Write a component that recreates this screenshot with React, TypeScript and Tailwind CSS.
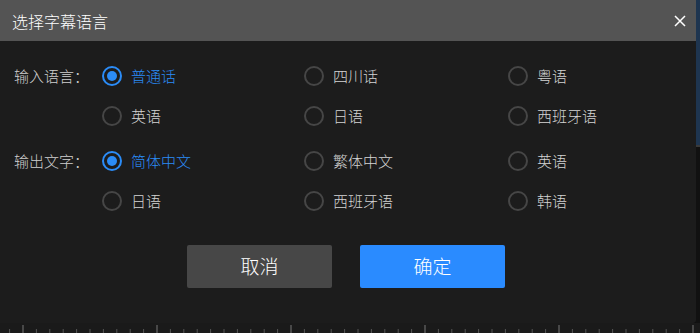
import React, { useState } from 'react';

const font = { fontFamily: '"Noto Sans CJK SC", "Noto Sans", sans-serif' };

const inputLangs = ['普通话', '四川话', '粤语', '英语', '日语', '西班牙语'];
const outputLangs = ['简体中文', '繁体中文', '英语', '日语', '西班牙语', '韩语'];

type RadioGroupProps = {
  label: string;
  options: string[];
  value: string;
  onChange: (v: string) => void;
};

const Radio = ({ checked, text, onClick }: { checked: boolean; text: string; onClick: () => void }) => (
  <button onClick={onClick} className="flex items-center h-[40px] gap-[9px] text-left">
    {checked ? (
      <span className="w-[20px] h-[20px] rounded-full border-2 border-[#2b8cf7] flex items-center justify-center">
        <span className="w-[10px] h-[10px] rounded-full bg-[#2b8cf7]" />
      </span>
    ) : (
      <span className="w-[20px] h-[20px] rounded-full border-2 border-[#464646]" />
    )}
    <span className={checked ? 'text-[#2b8cf7]' : 'text-[#d4d4d4]'}>{text}</span>
  </button>
);

const RadioGroup = ({ label, options, value, onChange }: RadioGroupProps) => (
  <div className="flex">
    <div className="w-[102px] pl-[14px] h-[40px] flex items-center text-[#cfcfcf]">{label}</div>
    <div className="grid grid-cols-[202px_204px_150px]">
      {options.map((o) => (
        <Radio key={o} text={o} checked={o === value} onClick={() => onChange(o)} />
      ))}
    </div>
  </div>
);

const Ruler = () => {
  const ticks = Array.from({ length: 53 }, (_, i) => i);
  return (
    <svg width="700" height="10" className="block">
      {ticks.map((i) => {
        const x = 23 + (i - 1) * 13.4;
        const major = (i - 1) % 10 === 0;
        return (
          <line
            key={i}
            x1={x}
            x2={x}
            y1={major ? 2 : 6}
            y2={10}
            stroke={major ? '#777' : '#555'}
            strokeWidth="1"
          />
        );
      })}
    </svg>
  );
};

export default function App() {
  const [input, setInput] = useState('普通话');
  const [output, setOutput] = useState('简体中文');

  return (
    <div className="w-[700px] h-[333px] bg-[#141414] flex flex-col overflow-hidden font-light" style={font}>
      <div className="flex h-[323px]">
        <div className="w-[696px] flex flex-col bg-[#1c1c1c] shadow-[0_2px_6px_rgba(0,0,0,0.6)] rounded-br-[3px]">
          <div className="h-[41px] bg-[#545454] flex items-center justify-between pl-[12px] pr-[10px]">
            <span className="text-white text-[16px]">选择字幕语言</span>
            <button className="text-white">
              <svg width="12" height="12" viewBox="0 0 12 12">
                <path d="M1 1L11 11M11 1L1 11" stroke="#fff" strokeWidth="1.5" />
              </svg>
            </button>
          </div>
          <div className="flex flex-col text-[15px] pt-[15px]">
            <RadioGroup label="输入语言：" options={inputLangs} value={input} onChange={setInput} />
            <div className="h-[5px]" />
            <RadioGroup label="输出文字：" options={outputLangs} value={output} onChange={setOutput} />
          </div>
          <div className="flex justify-center gap-[28px] pt-[24px] pr-[4px]">
            <button className="w-[145px] h-[43px] rounded-[2px] bg-[#474747] text-white text-[19px]">取消</button>
            <button className="w-[145px] h-[43px] rounded-[2px] bg-[#2a8bff] text-white text-[19px]">确定</button>
          </div>
        </div>
        <div className="flex-1 flex flex-col">
          <div className="h-[145px] bg-[#1e3550]" />
          <div className="h-[2px] bg-[#3a3a3a]" />
          <div className="flex-1 bg-[#111]" />
        </div>
      </div>
      <div className="flex-1 bg-[#1a1a1a]">
        <Ruler />
      </div>
    </div>
  );
}
